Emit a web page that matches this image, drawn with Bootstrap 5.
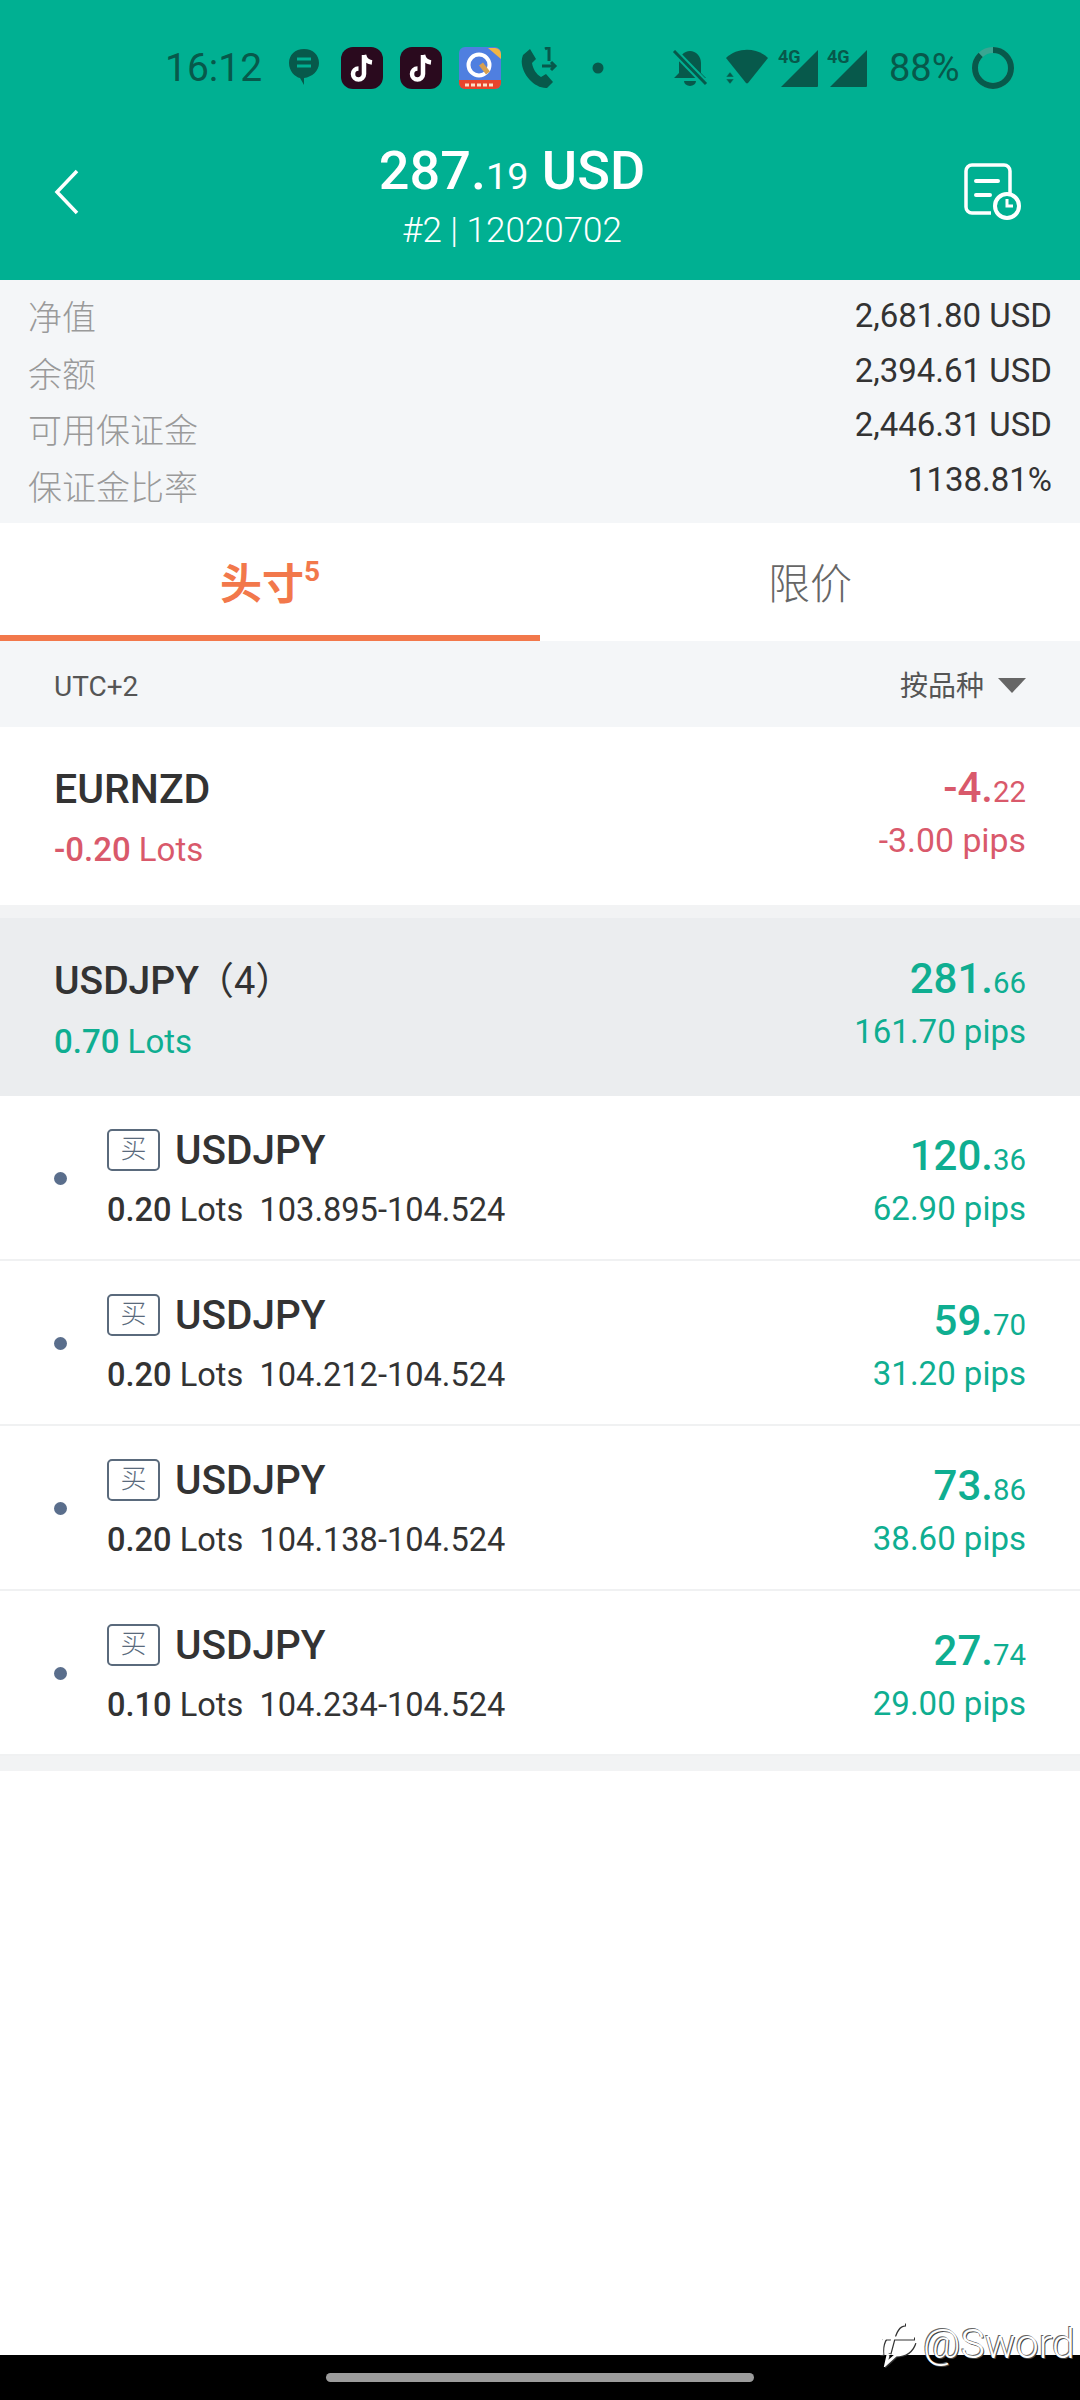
<!DOCTYPE html>
<html lang="zh"><head><meta charset="utf-8"><title>Position</title>
<link href="https://cdn.jsdelivr.net/npm/bootstrap@5.3.0/dist/css/bootstrap.min.css" rel="stylesheet">
<style>
html,body{margin:0;background:#fff}
.app-page{width:1080px;height:2400px;font-family:Roboto,"Noto Sans CJK SC",sans-serif;color:#333;position:relative;overflow:hidden}
.top-head{height:280px;background:#00b092;color:#fff}
.status-bar{height:112px;padding:24px 0 0 165px;color:#07594b}
.status-bar svg{display:block;flex:none}
.st-time{font-size:39px;width:123px;line-height:1}
.st-pct{font-size:38px;line-height:1;width:83px}
.nav-line{height:160px;padding:0 59px 0 54px}
.head-title{font-size:54px;font-weight:500;line-height:60px;margin-top:5.500px;text-align:center;margin-left:-19px}
.head-title small,.amt small{font-size:.7em;font-weight:400}
.head-sub{font-size:35px;line-height:36px;margin-top:7px;text-align:center;margin-left:-19px;font-weight:300}
.head-mid{flex:1}
.sum-box{height:243px;background:#f4f6f8;padding:10px 28px 0}
.sum-lab{font-size:34px;color:#9a9a9a;line-height:56.500px;font-weight:300}
.sum-val{font-size:33px;line-height:55.600px;text-align:right;color:#333;margin-top:-1px}
.sum-val:first-child{margin-top:-2px}
.tab-row{height:118px}
.tab-item{width:540px;height:118px;font-size:42px;line-height:124px;color:#666;text-align:center;font-weight:300}
.tab-on{color:#f2784b;font-weight:700;border-bottom:6px solid #f2784b}
.tab-on sup{font-size:28px;top:-18px;line-height:0}
.filter-bar{height:86px;background:#f4f6f8;padding:6px 54px 0;font-size:28px;color:#555}
.tri-down{width:0;height:0;border:14px solid transparent;border-top:15px solid #666;border-bottom:0;margin-left:14px;margin-top:-4px}
.sum-row{height:178px;padding:0 54px}
.sym{font-size:41px;font-weight:500;line-height:46px;color:#333;margin-top:3px}
.sym-tight{font-size:39px}
.sym-paren{font-size:38px;font-weight:400;margin-left:-3px}
.sub-line{font-size:33px;line-height:38px;margin-top:19px}
.sub-line b{font-weight:500}
.amt{font-size:42px;font-weight:500;line-height:46px;text-align:right}
.pips{font-size:33px;line-height:38px;text-align:right;margin-top:7px}
.pips-wide{font-size:33.800px}
.gap-strip{height:13px;background:#f2f3f4}
.grp-bg{background:#ebedef}
.c-red{color:#d9596b}.c-green{color:#0fae91}
.pos-row{height:165px;padding:0 54px;border-bottom:2px solid #f0f1f2}
.pos-row:last-of-type{border-bottom:0}
.pdot{width:13px;height:13px;border-radius:50%;background:#5a6e8c;margin-right:40px;margin-top:2px}
.buy-tag{width:53px;height:42px;border:2.500px solid #5a6a7c;border-radius:5px;color:#5a6a7c;font-size:26px;line-height:36px;text-align:center;margin-right:15px;font-weight:300}
.pos-sym{font-size:40.500px;font-weight:500;line-height:46px}
.pos-sub{font-size:32.600px;line-height:38px;margin-top:18px;color:#333}
.pos-sub b{font-weight:500}
.pos-amt{margin-top:6px}
.bottom-strip{height:15px;background:#f2f3f4}
.nav-black{height:45px;background:#000}
.home-pill{width:428px;height:9px;border-radius:5px;background:#9c9c9c}
.mark-over{position:absolute;left:878px;top:2320px;color:#fff;font-size:41px;font-weight:300;line-height:48px;text-shadow:-1px -1px 0 #666,1px 1px 0 #444;white-space:nowrap}
.mark-over svg{filter:drop-shadow(1px 1px 0 #333)}
</style></head><body>
<div class="app-page d-flex flex-column">
<header class="top-head">
 <div class="status-bar d-flex align-items-center">
  <span class="st-time">16:12</span>
  <svg width="32" height="44" viewBox="0 0 32 44" style="margin-right:21px"><path d="M16 3C7 3 1 9 1 17s6 14 11 15l4 7v-7c8-1 15-7 15-15S25 3 16 3z" fill="#07594b"/><path d="M9 13h14M9 20h14" stroke="#00b092" stroke-width="3"/></svg>
  <svg width="42" height="42" viewBox="0 0 42 42" style="margin-right:17px"><rect width="42" height="42" rx="12" fill="#2a0a1e"/><path d="M23 8v19a5.500 5.500 0 1 1-5.500-5.500M23 8c1 5 4 7 8 7.500" fill="none" stroke="#fff" stroke-width="4.500"/></svg>
  <svg width="42" height="42" viewBox="0 0 42 42" style="margin-right:17px"><rect width="42" height="42" rx="12" fill="#2a0a1e"/><path d="M23 8v19a5.500 5.500 0 1 1-5.500-5.500M23 8c1 5 4 7 8 7.500" fill="none" stroke="#fff" stroke-width="4.500"/></svg>
  <svg width="42" height="42" viewBox="0 0 42 42" style="margin-right:19px"><rect width="42" height="42" rx="6" fill="#4f7fe0"/><path d="M0 33h42v3a6 6 0 0 1-6 6H6a6 6 0 0 1-6-6z" fill="#e8452c"/><path d="M29 1h7a6 6 0 0 1 6 6v5z" fill="#f2b544"/><circle cx="20" cy="18" r="10.500" fill="none" stroke="#fff" stroke-width="4"/><path d="M22 17l7 9" stroke="#d8a050" stroke-width="5"/><path d="M6 38h30" stroke="#fde0c8" stroke-width="3" stroke-dasharray="4 2"/></svg>
  <svg width="38" height="42" viewBox="0 0 38 42" style="margin-right:34px"><path d="M3 8l7-6 6 10-4 4c1 6 4 11 9 14l5-3 7 8-6 6C13 42-3 22 3 8z" fill="#07594b"/><path d="M25 2l4-2v14M22 19h13m-4-4 4 4-4 4" fill="none" stroke="#07594b" stroke-width="3"/></svg>
  <svg width="12" height="12" viewBox="0 0 12 12" style="margin-right:68px"><circle cx="6" cy="6" r="5.500" fill="#07594b"/></svg>
  <svg width="36" height="36" viewBox="0 0 36 36" style="margin-right:18px"><path d="M18 1c6 0 11 5 11 12v10l5 5H2l5-5V13C7 6 12 1 18 1z" fill="#07594b"/><path d="M12 31h12a6 5 0 0 1-12 0z" fill="#07594b"/><path d="M2 1l32 33" stroke="#00b092" stroke-width="7"/><path d="M2 1l32 33" stroke="#07594b" stroke-width="3"/></svg>
  <svg width="42" height="38" viewBox="0 0 42 38" style="margin-right:10px"><path d="M0 9C11-2 31-2 42 9L22 34a1.500 1.500 0 0 1-2 0z" fill="#07594b"/><path d="M0 28l4-5 4 5zM0 30l4 5 4-5z" fill="#07594b" stroke="#00b092" stroke-width=".5"/></svg>
  <svg width="40" height="50" viewBox="0 -6 40 50" style="margin-right:9px"><path d="M40 1v36a1 1 0 0 1-1 1H3z" fill="#07594b"/><text x="0" y="14" font-size="18" font-weight="700" font-family="Roboto" fill="#07594b">4G</text></svg>
  <svg width="40" height="50" viewBox="0 -6 40 50" style="margin-right:22px"><path d="M40 1v36a1 1 0 0 1-1 1H3z" fill="#07594b"/><text x="0" y="14" font-size="18" font-weight="700" font-family="Roboto" fill="#07594b">4G</text></svg>
  <span class="st-pct">88%</span>
  <svg width="42" height="42" viewBox="0 0 42 42"><circle cx="21" cy="21" r="18" fill="none" stroke="#3aa592" stroke-width="6"/><circle cx="21" cy="21" r="18" fill="none" stroke="#07594b" stroke-width="6" pathLength="100" stroke-dasharray="88 12" transform="rotate(-90 21 21)"/></svg>
 </div>
 <div class="nav-line d-flex align-items-center">
  <svg width="26" height="46" viewBox="0 0 26 46"><path d="M23 2 3 23l20 21" fill="none" stroke="#fff" stroke-width="3.500"/></svg>
  <div class="head-mid">
   <div class="head-title">287.<small>19</small> USD</div>
   <div class="head-sub">#2 | 12020702</div>
  </div>
  <svg width="58" height="58" viewBox="0 0 58 58"><path d="M28 50H9a6 6 0 0 1-6-6V8a6 6 0 0 1 6-6h32a6 6 0 0 1 6 6v24" fill="none" stroke="#fff" stroke-width="3.500"/><path d="M13 18h22M13 32h14" stroke="#fff" stroke-width="4" stroke-linecap="round"/><circle cx="44" cy="43" r="12" fill="#00b092" stroke="#fff" stroke-width="4"/><path d="M44 36v7h6" fill="none" stroke="#fff" stroke-width="3"/></svg>
 </div>
</header>

<section class="sum-box d-flex justify-content-between">
 <div><div class="sum-lab">净值</div><div class="sum-lab">余额</div><div class="sum-lab">可用保证金</div><div class="sum-lab">保证金比率</div></div>
 <div><div class="sum-val">2,681.80 USD</div><div class="sum-val">2,394.61 USD</div><div class="sum-val">2,446.31 USD</div><div class="sum-val">1138.81%</div></div>
</section>

<nav class="tab-row d-flex">
 <div class="tab-item tab-on">头寸<sup>5</sup></div>
 <div class="tab-item">限价</div>
</nav>

<div class="filter-bar d-flex align-items-center justify-content-between">
 <span>UTC+2</span>
 <span class="d-flex align-items-center">按品种<span class="tri-down"></span></span>
</div>

<div class="sum-row d-flex align-items-center justify-content-between">
 <div><div class="sym">EURNZD</div><div class="sub-line c-red"><b>-0.20</b> Lots</div></div>
 <div class="mb-2"><div class="amt c-red">-4.<small>22</small></div><div class="pips pips-wide c-red">-3.00 pips</div></div>
</div>
<div class="gap-strip"></div>
<div class="sum-row grp-bg d-flex align-items-center justify-content-between">
 <div><div class="sym"><span class="sym-tight">USDJPY</span><span class="sym-paren">（4）</span></div><div class="sub-line c-green"><b>0.70</b> Lots</div></div>
 <div class="mb-2"><div class="amt c-green">281.<small>66</small></div><div class="pips c-green">161.70 pips</div></div>
</div>

<div class="pos-row d-flex align-items-center">
 <span class="pdot"></span>
 <div class="flex-grow-1"><div class="d-flex align-items-center"><span class="buy-tag">买</span><span class="pos-sym">USDJPY</span></div><div class="pos-sub"><b>0.20</b> Lots&nbsp; 103.895-104.524</div></div>
 <div class="pos-amt"><div class="amt c-green">120.<small>36</small></div><div class="pips c-green">62.90 pips</div></div>
</div>
<div class="pos-row d-flex align-items-center">
 <span class="pdot"></span>
 <div class="flex-grow-1"><div class="d-flex align-items-center"><span class="buy-tag">买</span><span class="pos-sym">USDJPY</span></div><div class="pos-sub"><b>0.20</b> Lots&nbsp; 104.212-104.524</div></div>
 <div class="pos-amt"><div class="amt c-green">59.<small>70</small></div><div class="pips c-green">31.20 pips</div></div>
</div>
<div class="pos-row d-flex align-items-center">
 <span class="pdot"></span>
 <div class="flex-grow-1"><div class="d-flex align-items-center"><span class="buy-tag">买</span><span class="pos-sym">USDJPY</span></div><div class="pos-sub"><b>0.20</b> Lots&nbsp; 104.138-104.524</div></div>
 <div class="pos-amt"><div class="amt c-green">73.<small>86</small></div><div class="pips c-green">38.60 pips</div></div>
</div>
<div class="pos-row d-flex align-items-center">
 <span class="pdot"></span>
 <div class="flex-grow-1"><div class="d-flex align-items-center"><span class="buy-tag">买</span><span class="pos-sym">USDJPY</span></div><div class="pos-sub"><b>0.10</b> Lots&nbsp; 104.234-104.524</div></div>
 <div class="pos-amt"><div class="amt c-green">27.<small>74</small></div><div class="pips c-green">29.00 pips</div></div>
</div>
<div class="bottom-strip"></div>
<div class="flex-grow-1"></div>
<div class="nav-black d-flex justify-content-center align-items-center"><span class="home-pill"></span></div>
<div class="mark-over d-flex align-items-center">
 <svg width="40" height="46" viewBox="0 0 40 46" style="margin-right:5px"><path d="M4 34c-1-8 1-14 3-17M36 21c-2 8-9 13-18 13l-10 9 2-9" fill="none" stroke="#fff" stroke-width="3"/><path d="M27 3c-8 0-11 8-13 18l-3 11M3 17h33" fill="none" stroke="#fff" stroke-width="3"/></svg>
 <span>@Sword</span>
</div>
</div>
<script src="https://cdn.jsdelivr.net/npm/bootstrap@5.3.0/dist/js/bootstrap.bundle.min.js"></script>
</body></html>
